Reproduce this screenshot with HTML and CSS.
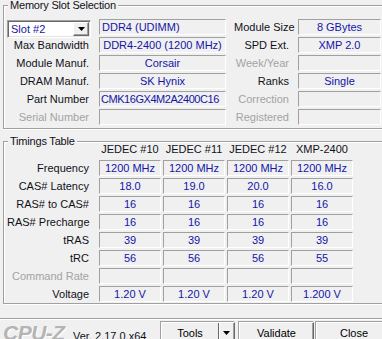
FILE: index.html
```html
<!DOCTYPE html>
<html>
<head>
<meta charset="utf-8">
<link rel="stylesheet" href="styles.css">
</head>
<body>
<div class="app">
  <section class="group g1">
    <span class="legend">Memory Slot Selection</span>
    <div class="slot-grid">
      <div class="combo"><span class="combo-val">Slot #2</span><span class="combo-btn"><svg width="7" height="4" viewBox="0 0 7 4"><path d="M0 0H7L3.5 4Z" fill="#000"/></svg></span></div>
      <div class="field left">DDR4 (UDIMM)</div>
      <div class="lbl">Module Size</div>
      <div class="field">8 GBytes</div>

      <div class="lbl">Max Bandwidth</div>
      <div class="field">DDR4-2400 (1200 MHz)</div>
      <div class="lbl">SPD Ext.</div>
      <div class="field">XMP 2.0</div>

      <div class="lbl">Module Manuf.</div>
      <div class="field">Corsair</div>
      <div class="lbl dis">Week/Year</div>
      <div class="field"></div>

      <div class="lbl">DRAM Manuf.</div>
      <div class="field">SK Hynix</div>
      <div class="lbl">Ranks</div>
      <div class="field">Single</div>

      <div class="lbl">Part Number</div>
      <div class="field left tight">CMK16GX4M2A2400C16</div>
      <div class="lbl dis">Correction</div>
      <div class="field"></div>

      <div class="lbl dis">Serial Number</div>
      <div class="field"></div>
      <div class="lbl dis">Registered</div>
      <div class="field"></div>
    </div>
  </section>

  <section class="group g2">
    <span class="legend">Timings Table</span>
    <div class="tgrid">
      <div></div>
      <div class="th">JEDEC #10</div>
      <div class="th">JEDEC #11</div>
      <div class="th">JEDEC #12</div>
      <div class="th">XMP-2400</div>

      <div class="lbl">Frequency</div>
      <div class="field">1200 MHz</div><div class="field">1200 MHz</div><div class="field">1200 MHz</div><div class="field">1200 MHz</div>

      <div class="lbl">CAS# Latency</div>
      <div class="field">18.0</div><div class="field">19.0</div><div class="field">20.0</div><div class="field">16.0</div>

      <div class="lbl">RAS# to CAS#</div>
      <div class="field">16</div><div class="field">16</div><div class="field">16</div><div class="field">16</div>

      <div class="lbl">RAS# Precharge</div>
      <div class="field">16</div><div class="field">16</div><div class="field">16</div><div class="field">16</div>

      <div class="lbl">tRAS</div>
      <div class="field">39</div><div class="field">39</div><div class="field">39</div><div class="field">39</div>

      <div class="lbl">tRC</div>
      <div class="field">56</div><div class="field">56</div><div class="field">56</div><div class="field">55</div>

      <div class="lbl dis">Command Rate</div>
      <div class="field"></div><div class="field"></div><div class="field"></div><div class="field"></div>

      <div class="lbl">Voltage</div>
      <div class="field">1.20 V</div><div class="field">1.20 V</div><div class="field">1.20 V</div><div class="field">1.200 V</div>
    </div>
  </section>

  <footer class="bar">
    <div class="logo">CPU-Z</div>
    <div class="ver">Ver. 2.17.0.x64</div>
    <div class="btn split"><span class="btn-text">Tools</span><span class="btn-arrow"><svg width="7" height="4" viewBox="0 0 7 4"><path d="M0 0H7L3.5 4Z" fill="#000"/></svg></span></div>
    <div class="btn validate">Validate</div>
    <div class="btn close">Close</div>
  </footer>
</div>
</body>
</html>
```

FILE: styles.css
```css
html, body {
  margin: 0;
  padding: 0;
}
body {
  width: 382px;
  height: 339px;
  overflow: hidden;
  background: #f0f0f0;
  font-family: "Liberation Sans", Arial, sans-serif;
  font-size: 11px;
  color: #101018;
}
.app {
  padding-top: 5px;
  padding-left: 3px;
  width: 420px;
}
.group {
  position: relative;
  border: 1px solid #a0a0a0;
  box-shadow: inset 1px 1px 0 #fff, 1px 1px 0 #fff;
  box-sizing: border-box;
}
.legend {
  position: absolute;
  top: -8px;
  left: 4px;
  padding: 0 2px;
  background: #f0f0f0;
  line-height: 15px;
  letter-spacing: -0.2px;
  color: #101018;
}
.g1 {
  height: 124px;
  padding: 13px 0 0 3px;
}
.slot-grid {
  display: grid;
  grid-template-columns: 84px 127px 56px 83px;
  grid-auto-rows: 16px;
  column-gap: 8px;
  row-gap: 2px;
}
.lbl {
  text-align: right;
  line-height: 16px;
  white-space: nowrap;
  padding-right: 2px;
}
.slot-grid .lbl:nth-child(4n+3) {
  padding-right: 1px;
}
.dis {
  color: #a3a3a3;
}
.field {
  box-sizing: border-box;
  height: 16px;
  border: 1px solid;
  border-color: #a0a0a0 #ffffff #ffffff #a0a0a0;
  color: #1414a8;
  text-align: center;
  line-height: 14px;
  white-space: nowrap;
  overflow: hidden;
}
.field.left {
  text-align: left;
  padding-left: 2px;
}
.field.tight {
  letter-spacing: -0.45px;
  padding-left: 1px;
}
.combo {
  box-sizing: border-box;
  height: 18px;
  margin-top: 1px;
  display: flex;
  background: #fff;
  border: 1px solid;
  border-color: #a0a0a0 #ffffff #ffffff #a0a0a0;
  box-shadow: inset 1px 1px 0 #696969, inset -1px -1px 0 #e3e3e3;
}
.combo-val {
  flex: 1;
  color: #1414a8;
  line-height: 16px;
  padding-left: 3px;
}
.combo-btn {
  box-sizing: border-box;
  width: 16px;
  margin: 1px 1px 1px 0;
  background: #f0f0f0;
  border: 1px solid;
  border-color: #ffffff #696969 #696969 #ffffff;
  box-shadow: inset -1px -1px 0 #a0a0a0;
  display: flex;
  align-items: center;
  justify-content: center;
}
.g2 {
  margin-top: 12px;
  height: 163px;
  padding: 0 0 0 3px;
}
.tgrid {
  display: grid;
  grid-template-columns: 90px 62px 62px 62px 62px;
  grid-auto-rows: 16px;
  column-gap: 2px;
  row-gap: 2px;
}
.tgrid > .lbl {
  padding-right: 8px;
}
.th {
  text-align: center;
  line-height: 15px;
  white-space: nowrap;
}
.bar {
  margin-top: 14px;
  margin-left: -3px;
  border-top: 1px solid #a0a0a0;
  box-shadow: inset 0 1px 0 #fff;
  display: flex;
  align-items: flex-start;
  height: 40px;
}
.logo {
  width: 68px;
  padding-left: 3px;
  padding-top: 3px;
  font-weight: bold;
  font-style: italic;
  font-size: 21px;
  line-height: 22px;
  color: #b4b4b4;
  letter-spacing: -0.5px;
  text-shadow: 1px 1px 0 #fff;
}
.ver {
  width: 88px;
  padding-left: 2px;
  padding-top: 11px;
  line-height: 13px;
  color: #101018;
}
.btn {
  box-sizing: border-box;
  margin-top: 3px;
  height: 24px;
  border: 1px solid;
  border-color: #ffffff #696969 #696969 #ffffff;
  box-shadow: inset -1px -1px 0 #a0a0a0, -1px -1px 0 #a0a0a0;
  background: #f0f0f0;
  text-align: center;
  line-height: 20px;
  color: #000;
}
.split {
  width: 74px;
  display: flex;
}
.btn-text {
  flex: 1;
  text-align: center;
}
.btn-arrow {
  width: 16px;
  box-sizing: border-box;
  border-left: 1px solid #696969;
  box-shadow: inset 1px 0 0 #fff;
  display: flex;
  align-items: center;
  justify-content: center;
  height: 20px;
}
.validate {
  width: 75px;
  margin-left: 4px;
}
.close {
  width: 76px;
  margin-left: 2px;
}
```
